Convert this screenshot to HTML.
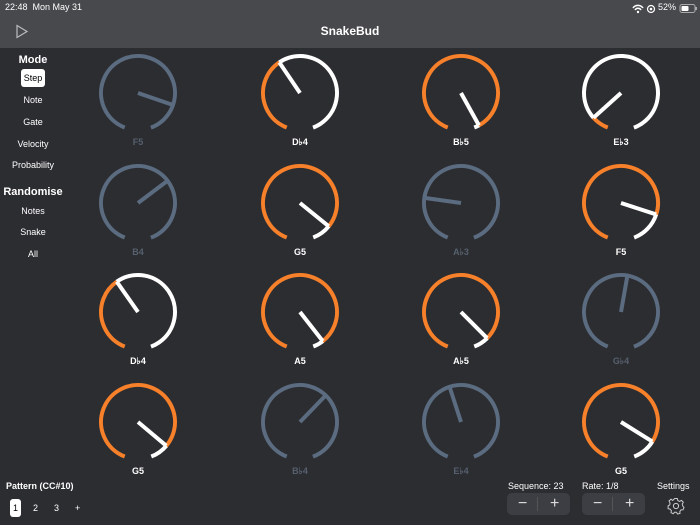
<!DOCTYPE html>
<html><head><meta charset="utf-8"><style>
body{margin:0;width:700px;height:525px;background:#2c2d31;font-family:"Liberation Sans",sans-serif;color:#fff;position:relative;overflow:hidden}
.hdr{position:absolute;left:0;top:0;width:700px;height:48px;background:#48494d}
.t{position:absolute;white-space:nowrap}
.side{position:absolute;left:0;width:66px;text-align:center;font-size:9px;color:#fff}
.b{font-weight:bold}
.step{position:absolute;background:#3d3e43;border-radius:5px;height:22px;width:63px}
.step span{position:absolute;top:0;line-height:21px;font-size:16px;color:#ddd}
</style></head><body>
<div class="hdr"></div>
<div class="t" style="left:5px;top:2px;font-size:9px">22:48&nbsp;&nbsp;Mon May 31</div>
<div class="t" style="left:658px;top:2px;font-size:9px">52%</div>
<svg style="position:absolute;left:630px;top:2px" width="70" height="14">
<path d="M3 6 A6 6 0 0 1 13 6" stroke="#fff" stroke-width="1.5" fill="none"/><path d="M5 8 A3.5 3.5 0 0 1 11 8" stroke="#fff" stroke-width="1.5" fill="none"/><circle cx="8" cy="10" r="1.2" fill="#fff"/>
<circle cx="21" cy="7" r="3.5" stroke="#fff" stroke-width="1.2" fill="none"/><circle cx="21" cy="7" r="1.3" fill="#fff"/>
<rect x="50" y="2.5" width="15" height="8" rx="2" stroke="#aaa" fill="none"/><rect x="51.5" y="4" width="7" height="5" rx="1" fill="#fff"/><rect x="65.5" y="5" width="1.5" height="3" fill="#aaa"/>
</svg>
<svg style="position:absolute;left:15px;top:24px" width="14" height="15"><path d="M2 1.5 L12 7.5 L2 13.5 Z" stroke="#bbb" stroke-width="1.2" fill="none"/></svg>
<div class="t b" style="left:0;width:700px;text-align:center;top:24px;font-size:12px">SnakeBud</div>

<div class="side b" style="top:54px;font-size:11px">Mode</div>
<div style="position:absolute;left:21px;top:69px;width:24px;height:18px;background:#fff;border-radius:3px;color:#000;font-size:9px;text-align:center;line-height:18px">Step</div>
<div class="side" style="top:95px">Note</div>
<div class="side" style="top:117px">Gate</div>
<div class="side" style="top:139px">Velocity</div>
<div class="side" style="top:160px">Probability</div>
<div class="side b" style="top:186px;font-size:11px">Randomise</div>
<div class="side" style="top:206px">Notes</div>
<div class="side" style="top:227px">Snake</div>
<div class="side" style="top:249px">All</div>

<svg style="position:absolute;left:0;top:0" width="700" height="525" font-family="Liberation Sans,sans-serif" font-size="9" font-weight="bold" text-anchor="middle">
<g fill="none" stroke-width="4">
<!-- row1 -->
<g transform="translate(138,93)"><circle r="37" stroke="#5b6b80" stroke-dasharray="205.4 300" transform="rotate(111)"/><line x2="0" y2="37" stroke="#5b6b80" transform="rotate(289)"/></g>
<g transform="translate(300,93)"><circle r="37" stroke="#f7802a" stroke-dasharray="80.7 300" transform="rotate(111)"/><circle r="37" stroke="#fff" stroke-dasharray="124.7 300" transform="rotate(236)"/><line x2="0" y2="37" stroke="#fff" transform="rotate(146)"/></g>
<g transform="translate(461,93)"><circle r="37" stroke="#f7802a" stroke-dasharray="200.2 300" transform="rotate(111)"/><circle r="37" stroke="#fff" stroke-dasharray="5.2 300" transform="rotate(421)"/><line x2="0" y2="37" stroke="#fff" transform="rotate(331)"/></g>
<g transform="translate(621,93)"><circle r="37" stroke="#f7802a" stroke-dasharray="17.4 300" transform="rotate(111)"/><circle r="37" stroke="#fff" stroke-dasharray="188 300" transform="rotate(138)"/><line x2="0" y2="37" stroke="#fff" transform="rotate(48)"/></g>
<!-- row2 -->
<g transform="translate(138,203)"><circle r="37" stroke="#5b6b80" stroke-dasharray="205.4 300" transform="rotate(111)"/><line x2="0" y2="37" stroke="#5b6b80" transform="rotate(233)"/></g>
<g transform="translate(300,203)"><circle r="37" stroke="#f7802a" stroke-dasharray="186 300" transform="rotate(111)"/><circle r="37" stroke="#fff" stroke-dasharray="19.4 300" transform="rotate(399)"/><line x2="0" y2="37" stroke="#fff" transform="rotate(309)"/></g>
<g transform="translate(461,203)"><circle r="37" stroke="#5b6b80" stroke-dasharray="205.4 300" transform="rotate(111)"/><line x2="0" y2="37" stroke="#5b6b80" transform="rotate(98)"/></g>
<g transform="translate(621,203)"><circle r="37" stroke="#f7802a" stroke-dasharray="172.3 300" transform="rotate(111)"/><circle r="37" stroke="#fff" stroke-dasharray="33 300" transform="rotate(378)"/><line x2="0" y2="37" stroke="#fff" transform="rotate(288)"/></g>
<!-- row3 -->
<g transform="translate(138,312)"><circle r="37" stroke="#f7802a" stroke-dasharray="80 300" transform="rotate(111)"/><circle r="37" stroke="#fff" stroke-dasharray="125.4 300" transform="rotate(235)"/><line x2="0" y2="37" stroke="#fff" transform="rotate(145)"/></g>
<g transform="translate(300,312)"><circle r="37" stroke="#f7802a" stroke-dasharray="194.4 300" transform="rotate(111)"/><circle r="37" stroke="#fff" stroke-dasharray="11 300" transform="rotate(412)"/><line x2="0" y2="37" stroke="#fff" transform="rotate(322)"/></g>
<g transform="translate(461,312)"><circle r="37" stroke="#f7802a" stroke-dasharray="189.9 300" transform="rotate(111)"/><circle r="37" stroke="#fff" stroke-dasharray="15.5 300" transform="rotate(405)"/><line x2="0" y2="37" stroke="#fff" transform="rotate(315)"/></g>
<g transform="translate(621,312)"><circle r="37" stroke="#5b6b80" stroke-dasharray="205.4 300" transform="rotate(111)"/><line x2="0" y2="37" stroke="#5b6b80" transform="rotate(190)"/></g>
<!-- row4 -->
<g transform="translate(138,422)"><circle r="37" stroke="#f7802a" stroke-dasharray="186.6 300" transform="rotate(111)"/><circle r="37" stroke="#fff" stroke-dasharray="18.7 300" transform="rotate(400)"/><line x2="0" y2="37" stroke="#fff" transform="rotate(310)"/></g>
<g transform="translate(300,422)"><circle r="37" stroke="#5b6b80" stroke-dasharray="205.4 300" transform="rotate(111)"/><line x2="0" y2="37" stroke="#5b6b80" transform="rotate(224)"/></g>
<g transform="translate(461,422)"><circle r="37" stroke="#5b6b80" stroke-dasharray="205.4 300" transform="rotate(111)"/><line x2="0" y2="37" stroke="#5b6b80" transform="rotate(162)"/></g>
<g transform="translate(621,422)"><circle r="37" stroke="#f7802a" stroke-dasharray="181.4 300" transform="rotate(111)"/><circle r="37" stroke="#fff" stroke-dasharray="23.9 300" transform="rotate(392)"/><line x2="0" y2="37" stroke="#fff" transform="rotate(302)"/></g>
</g>
<g fill="#fff">
<text x="138" y="145" fill="#56606e">F5</text><text x="300" y="145">D♭4</text><text x="461" y="145">B♭5</text><text x="621" y="145">E♭3</text>
<text x="138" y="255" fill="#56606e">B4</text><text x="300" y="255">G5</text><text x="461" y="255" fill="#56606e">A♭3</text><text x="621" y="255">F5</text>
<text x="138" y="364">D♭4</text><text x="300" y="364">A5</text><text x="461" y="364">A♭5</text><text x="621" y="364" fill="#56606e">G♭4</text>
<text x="138" y="474">G5</text><text x="300" y="474" fill="#56606e">B♭4</text><text x="461" y="474" fill="#56606e">E♭4</text><text x="621" y="474">G5</text>
</g>
</svg>

<div class="t b" style="left:6px;top:481px;font-size:9px">Pattern (CC#10)</div>
<div style="position:absolute;left:10px;top:499px;width:11px;height:18px;background:#fff;border-radius:3px;color:#000;font-size:9px;text-align:center;line-height:18px">1</div>
<div class="t" style="left:33px;top:503px;font-size:9px">2</div>
<div class="t" style="left:54px;top:503px;font-size:9px">3</div>
<div class="t" style="left:75px;top:503px;font-size:9px">+</div>

<div class="t" style="left:508px;top:481px;font-size:9px">Sequence: 23</div>
<div class="step" style="left:507px;top:493px"><span style="left:11px">−</span><span style="left:30px;top:4px;width:1px;height:14px;background:#555"></span><span style="left:43px">+</span></div>
<div class="t" style="left:582px;top:481px;font-size:9px">Rate: 1/8</div>
<div class="step" style="left:582px;top:493px"><span style="left:11px">−</span><span style="left:30px;top:4px;width:1px;height:14px;background:#555"></span><span style="left:43px">+</span></div>
<div class="t" style="left:657px;top:481px;font-size:9px">Settings</div>
<svg style="position:absolute;left:667px;top:497px" width="18" height="18" viewBox="-9 -9 18 18"><g stroke="#ccc" stroke-width="1" fill="none"><circle r="2.6"/><path d="M-1.3 -7.5 L1.3 -7.5 L1.8 -5.5 L3.6 -4.6 L5.5 -5.6 L7.3 -3.8 L6.2 -1.9 L6.8 0 L8 1.5 L7 3.8 L5 3.9 L3.8 5.5 L4 7.4 L1.5 8 L0.5 6.3 L-1.5 6.3 L-2.8 7.8 L-5 6.6 L-4.6 4.6 L-6 3.1 L-7.9 2.6 L-7.9 -0.1 L-6.2 -1.2 L-6 -3.2 L-7 -5 L-5 -6.8 L-3.3 -5.5 Z"/></g></svg>
</body></html>
